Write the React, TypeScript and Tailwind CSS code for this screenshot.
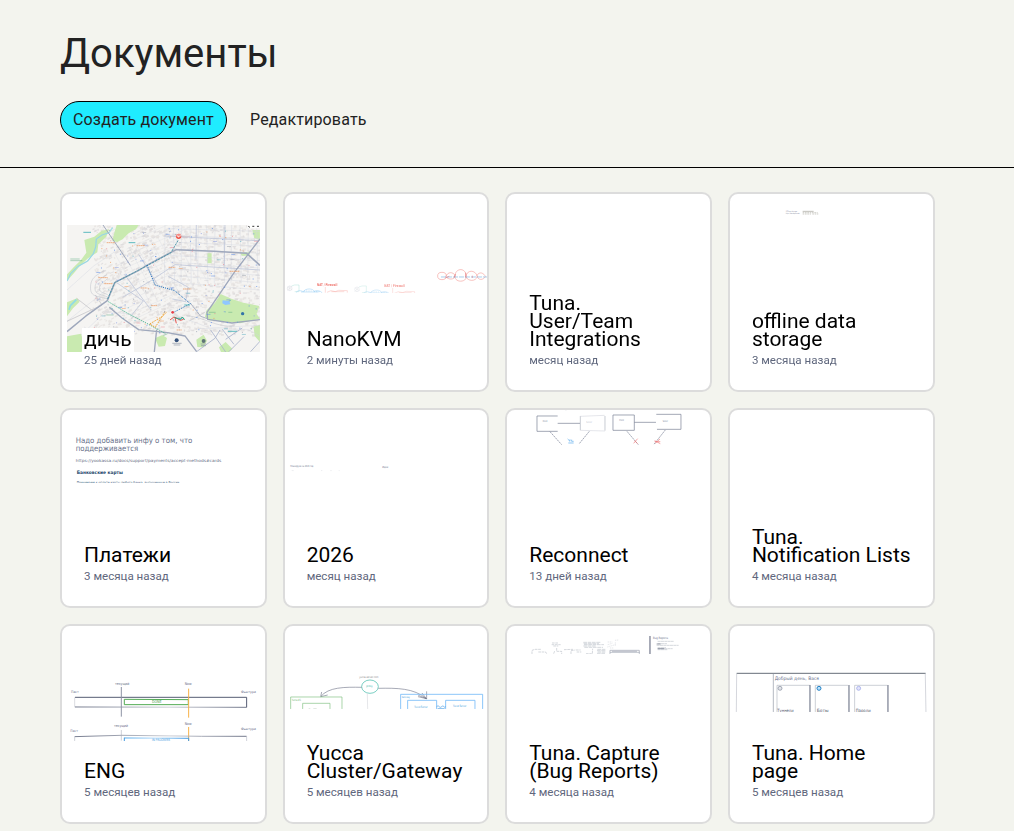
import * as React from 'react';

type PreviewProps = {
	// origin of the drawing inside the card, in thirds of a pixel
	x: number;
	y: number;
	// everything below this line is cut off
	bottom?: number;
	children: React.ReactNode;
};

const Preview: React.FC<PreviewProps> = ({ x, y, bottom = y + 588, children }) => (
	<svg
		viewBox={`${x} ${y} 608 588`}
		preserveAspectRatio="xMinYMin meet"
		className="col-start-1 row-start-1 h-full w-full"
		fontFamily="'DejaVu Sans', sans-serif"
		fill="none"
		aria-hidden="true"
	>
		<svg x={x} y={y} width="608" height={bottom - y} viewBox={`${x} ${y} 608 ${bottom - y}`}>
			{children}
		</svg>
	</svg>
);

type LabelProps = {
	x: number;
	y: number;
	w: number;
	size?: number;
	fill?: string;
	bold?: boolean;
	opacity?: number;
	children: string;
};

const Label: React.FC<LabelProps> = ({ x, y, w, size = 11, fill = '#68708a', bold, opacity, children }) => (
	<text
		x={x}
		y={y}
		fontSize={size}
		fill={fill}
		opacity={opacity}
		fontWeight={bold ? 700 : 400}
		textLength={w}
		lengthAdjust="spacingAndGlyphs"
	>
		{children}
	</text>
);

// deterministic noise for shops, stops and house blocks on the map
const noise = (n: number) => {
	const v = Math.sin(n * 127.1 + 11.7) * 43758.5453;
	return v - Math.floor(v);
};

const range = (n: number) => Array.from({ length: n }, (_, i) => i);

const poiColors = ['#5b8ce8', '#8a9be0', '#f09a5c', '#5b8ce8', '#e98a93', '#5aaec0', '#9aa0ad'];

const MapPreview: React.FC = () => (
	<Preview x={21} y={27}>
		<svg x="36" y="120" width="579" height="381" viewBox="36 120 579 381">
			<rect x="36" y="120" width="579" height="381" fill="#f5f4f2" />
			{range(1500).map((i) => {
				const x = 110 + noise(i) * 505;
				const y = 120 + noise(i + 4000) * 330;
				return (
					<rect
						key={i}
						x={x}
						y={y}
						width={3 + noise(i + 900) * 9}
						height={2 + noise(i + 700) * 5}
						fill={i % 3 ? '#e6e2e0' : '#dcdadb'}
						transform={x < 340 ? `rotate(-27 ${x} ${y})` : undefined}
						opacity="0.8"
					/>
				);
			})}
			{/* parks */}
			<g fill="#c9eab0">
				<path d="M185 120h66l-8 13-22 12-18 18-16 8-15-3 5-22z" />
				<path d="M88 165l30-10 22-18 22-4-8 22-24 23-3 24-28 18-25 24-15 18-23 26-6-13 26-28 22-22 16-22z" />
				<path d="M36 352l30-12 8 10-20 20-18 24z" />
				<path d="M36 454l42-8 8 26-6 29H36z" />
				<path d="M455 375l24-20 18-28 32 14 36 12 48 10-8 24 10 14-60 14-95-10-10-10z" />
				<path d="M457 205h13v30h-13zM556 203l28-3v12h-24zM592 135h23v30l-17-5zM596 425l19-6v52l-16-18z" />
				<path d="M300 460l22-10 14 9-6 24-19 2zM424 464l22-15 10 18-10 20-19-1zM492 487l20-16 20 20-10 10h-24z" />
			</g>
			{/* river */}
			<path d="M36 288l11-22 22-22 29-16 17-22 7-20 2-24 17-12 21-7 11-15" stroke="#a5e0ea" strokeWidth="4" />
			<path d="M36 288l11-22 22-22 29-16 17-22 7-20 2-24 17-12 21-7" stroke="#86bfce" />
			<path d="M42 374l4-12 18-18" stroke="#8edbe7" strokeWidth="5" />
			<path d="M503 346l20 2 3 10-15 2-9-5z" fill="#8fc7ff" />
			{/* side streets */}
			<g stroke="#d3d6e0" strokeWidth="1.5" opacity="0.85">
				{range(12).map((i) => (
					<path key={i} d={`M${330 + i * 25} 120l${i % 2 ? 4 : -2} 175`} />
				))}
				{range(9).map((i) => (
					<path key={i} d={`M345 ${131 + i * 20}l270 ${8 + i * 2}`} />
				))}
				{range(8).map((i) => (
					<path key={i} d={`M${150 + i * 13} ${312 - i * 24}l200 -88`} opacity="0.7" />
				))}
				{range(10).map((i) => (
					<path key={i} d={`M${177 + i * 22} ${200 - i * 7}l88 164`} opacity="0.7" />
				))}
				{range(7).map((i) => (
					<path key={i} d={`M${173 + i * 14} ${325 + i * 15}l160 -72`} opacity="0.7" />
				))}
				<path d="M36 315l80-72 65-44M78 450l74-70 82 8M87 426l102 65M36 409l113-90M400 405l65 24 150-8M430 430l150 4 35 20" />
			</g>
			<g stroke="#b3b8c2" strokeWidth="1.3">
				<path d="M158 342c-34-10-55-4-51-43 4-25 22-30 41-42M158 336c-23-9-43-7-37-35 6-19 21-22 35-33M158 329c-14-7-28-6-24-24 6-14 14-14 25-25" />
				<path d="M36 409l105-49-20-30M65 340l45 35" stroke="#9fa0a8" />
				<path d="M403 408l48-27M393 392c60 5 88 36 145 31" />
			</g>
			<g stroke="#bfc6da" strokeWidth="2.5">
				<path d="M424 120l-1 103M510 120l-2 122M327 153l286 14M185 293l80 55-38 46M340 274l60 33-8 43-40-8M251 208l56 90M208 268l80 107M285 289l75-50 255 16M203 337l82-48" />
				<path d="M425 500l55-40 15-25M467 435l45 66M512 463l50-34M522 500l45-45M587 500l28-31M537 478l-35-45" stroke="#a9b3cd" />
			</g>
			{/* highways */}
			<g stroke="#9fa8bc" strokeWidth="4.5" strokeLinejoin="round">
				<path d="M36 440l57-47 64-46 23-55 70-35 31-19 65-35 18-9 112 5 99 6 40 36" />
				<path d="M144 120l54 79 28 42" strokeWidth="3" />
				<path d="M163 367l39 33 49 34 87 9 52 10 35 47M305 434l-7 67" strokeWidth="4" />
				<path d="M615 162l-77 100-82 120 2 21 73 11 84-10" strokeWidth="4" />
				<path d="M406 354l31 40 20 7" strokeWidth="2.5" />
			</g>
			{/* routes */}
			<path d="M158 342l21-49 65-34 60-32 44-24 22-38" stroke="#4d96aa" strokeWidth="3" strokeDasharray="7 3" />
			<path d="M276 240l24 60 59 17 47 39-48 25" stroke="#1768b8" strokeWidth="3" strokeDasharray="3 3" />
			<path d="M160 350l61 37 60 31 51 28" stroke="#37ad85" strokeWidth="2.5" strokeDasharray="4 3" />
			<path d="M330 379l-9 16-37 22 17 10 17-28 17-18" stroke="#f0a536" strokeWidth="3" strokeDasharray="5 3" />
			<path d="M345 405l12-9 20 10 9-3M360 397l4 18" stroke="#e5524c" strokeWidth="3" />
			<path d="M359 398l18 5 5-7 7 8" stroke="#1e9f76" strokeWidth="3" />
			{range(185).map((i) => (
				<rect
					key={i}
					x={115 + noise(i + 77) * 490}
					y={124 + noise(i + 333) * 325}
					width={i % 6 === 0 ? 12 : 3}
					height={i % 6 === 0 ? 2 : 3}
					fill={poiColors[i % poiColors.length]}
					opacity="0.75"
				/>
			))}
			{[
				[155, 173, 25], [245, 182, 25], [130, 278, 28], [148, 296, 25], [341, 247, 20],
				[289, 362, 18], [384, 312, 25], [257, 309, 20], [524, 259, 30], [365, 435, 15],
			].map(([x, y, w]) => (
				<path key={`${x}-${y}`} d={`M${x} ${y}h${w}`} stroke="#eda06b" strokeWidth="2.5" strokeDasharray="5 1" />
			))}
			<path d="M85 142h23M221 173h20M388 360h17M369 401h13M519 439h27" stroke="#5bb9bf" strokeWidth="3" />
			<path d="M46 222h28M46 227h36M154 390h22M325 452l13-6M462 382h20M520 382h12" stroke="#61af82" strokeWidth="1.5" />
			<circle cx="371" cy="154" r="8" fill="#ee5145" />
			<path d="M366 150h10v4h-10zM371 153v5" stroke="#fff" strokeWidth="2" />
			<path d="M380 154h25M380 158h18" stroke="#b7989a" />
			<circle cx="353" cy="382" r="4" fill="#e73d47" />
			<circle cx="365" cy="466" r="6" fill="#35517b" />
			<circle cx="446" cy="468" r="6" fill="#607479" />
			<circle cx="563" cy="386" r="5" fill="#3474a8" />
			<path d="M352 475h28M356 480h20M437 477h17M438 482h15" stroke="#8d96a6" strokeWidth="2" />
			<path d="M577 120h38v10h-38z" fill="#fff" />
			<path d="M580 124l5 3M592 124h6M606 124h6" stroke="#333" strokeWidth="3" />
		</svg>
	</Preview>
);

const NanoPreview: React.FC = () => (
	<Preview x={29} y={27} bottom={324}>
		{[0, 202].map((dx) => (
			<g key={dx} transform={`translate(${dx} ${dx ? 3 : 0})`} opacity={dx ? 0.75 : 1}>
				<circle cx="43" cy="310" r="7" stroke="#c5c9d4" />
				<path d="M36 306l15 8M43 303v14M50 303l-15 14" stroke="#d5d8df" />
				<path d="M49 303l9-3h13v20H58" stroke="#8ed9cb" />
				<path d="M62 322c10-9 17-3 23-2 4-11 30-10 31-1 8-4 20-2 25 5M77 321h52" stroke="#91caf2" strokeWidth="1.5" />
				<path d="M85 318h24M115 320h20" stroke="#70b5e9" strokeDasharray="4 3" />
				<path d="M150 306v17M155 322l12-5 13 3 10-4 26 1v6M168 320h39" stroke="#f5958e" />
				<Label x={125} y={304} w={61} size={11} fill="#ef7770" bold>NAT / Firewall</Label>
			</g>
		))}
		<g stroke="#f49b95" strokeWidth="1.8">
			<ellipse cx="500" cy="273" rx="13" ry="11" />
			<path d="M512 275c4-15 22-16 28-2-3 12-21 12-28 2zM539 276c-2-27 33-31 34-2 2 18-32 20-34 2zM572 275c2-21 28-22 34-1-4 17-29 15-34 1zM605 272c6-14 22-8 25 3-6 11-22 12-25-3z" />
		</g>
		<path d="M497 276h138" stroke="#7db4e2" strokeWidth="2" strokeDasharray="15 3" />
		<path d="M510 279l12-5M541 267l-5 11M571 263v15M591 272v7" stroke="#dc5c63" strokeWidth="1.5" />
	</Preview>
);

const OfflinePreview: React.FC = () => (
	<Preview x={31} y={27} bottom={91}>
		<Label x={198} y={80} w={34} size={6} opacity={0.8}>Offline storage</Label>
		<Label x={198} y={87} w={42} size={6} opacity={0.8}>https://developer.web</Label>
		<path d="M249 79h33" stroke="#b5b2ab" strokeWidth="2.5" />
		<path d="M249 83h45M249 87h25M278 87h18" stroke="#b5b3ac" strokeDasharray="5 2" strokeWidth="2" />
	</Preview>
);

const PaymentsPreview: React.FC = () => (
	<Preview x={21} y={30} bottom={249}>
		<Label x={62} y={128} w={350} size={23}>Надо добавить инфу о том, что</Label>
		<Label x={62} y={153} w={188} size={23}>поддерживается</Label>
		<Label x={62} y={185} w={437} size={12} fill="#646c83">https://yookassa.ru/docs/support/payments/accept-methods#cards</Label>
		<Label x={65} y={221} w={139} size={14} fill="#24476b" bold>Банковские карты</Label>
		<Label x={65} y={252} w={308} size={12} fill="#41637e">Принимаем к оплате карты любого банка, выпущенные в России</Label>
	</Preview>
);

const YearPreview: React.FC = () => (
	<Preview x={29} y={30} bottom={214}>
		<Label x={45} y={201} w={69} size={8}>Планируем на 2026 год</Label>
		<Label x={321} y={203} w={18} size={8}>Идеи</Label>
		<path d="M49 212h6M137 212h4M165 212h4M190 212h3" stroke="#c4c8d2" />
	</Preview>
);

const ReconnectPreview: React.FC = () => (
	<Preview x={22} y={30} bottom={135}>
		<g stroke="#747b91" strokeWidth="2">
			<path d="M174 48H112v46h62" />
			<path d="M174 70h67M404 67h65" />
			<path d="M242 48v43M316 48v44" opacity="0.6" />
			<path d="M242 49l73-3M243 91l73 2" stroke="#d8dae1" />
			<path d="M340 45h64v46h-64z" />
			<path d="M470 43h74v45h-72" />
			<path d="M151 95l35 39M269 94l-31 38M382 94l34 40M497 90l-34 43" strokeDasharray="6 2" />
		</g>
		<Label x={129} y={67} w={14} size={8}>Client</Label>
		<Label x={260} y={69} w={17} size={8} opacity={0.5}>Server</Label>
		<Label x={359} y={64} w={14} size={8}>Client</Label>
		<Label x={489} y={66} w={16} size={8}>Server</Label>
		<path d="M204 117l7 7v-6M216 119v5h6M206 129h16" stroke="#58a9ec" strokeWidth="2" />
		<path d="M402 130l12-14M405 122l9 9M465 122l17 9M467 130l14-13M465 125h17" stroke="#ee7878" strokeWidth="2" />
		<path d="M197 32l5-3" stroke="#d9dbe2" />
	</Preview>
);

const EngPreview: React.FC = () => (
	<Preview x={21} y={30} bottom={375}>
		<defs>
			<linearGradient id="bar" x1="0" x2="1">
				<stop stopColor="#5b6279" />
				<stop offset="0.38" stopColor="#a2a7b4" />
				<stop offset="0.55" stopColor="#c1c4cd" />
				<stop offset="1" stopColor="#555c73" />
			</linearGradient>
			<linearGradient id="line" x1="0" x2="1">
				<stop stopColor="#52a9eb" />
				<stop offset="0.5" stopColor="#b7dcfb" />
				<stop offset="1" stopColor="#4098e2" />
			</linearGradient>
		</defs>
		<path d="M60 244h515v30" stroke="#555c73" strokeWidth="3" />
		<path d="M59 244v30" stroke="#c8cbd2" strokeWidth="2" />
		<path d="M60 273l515 1" stroke="url(#bar)" strokeWidth="2.5" />
		<path d="M208 250l192 1v15H208z" stroke="#51ab53" strokeWidth="3" />
		<Label x={291} y={261} w={29} size={12} fill="#4da052">DONE</Label>
		<path d="M199 213v89" stroke="#8d93a4" strokeWidth="3" />
		<path d="M401 218v87M401 333v42" stroke="#f7b248" strokeWidth="3" />
		<Label x={180} y={207} w={43} size={11}>текущий</Label>
		<Label x={389} y={207} w={21} size={11}>Now</Label>
		<Label x={48} y={231} w={24} size={10}>Паст</Label>
		<Label x={558} y={231} w={45} size={10}>Фьютура</Label>
		<Label x={177} y={333} w={42} size={11}>текущий</Label>
		<Label x={389} y={328} w={21} size={11}>Now</Label>
		<Label x={46} y={348} w={23} size={10}>Паст</Label>
		<Label x={558} y={341} w={45} size={10}>Фьютура</Label>
		<path d="M199 342v32" stroke="#cdd0d7" strokeWidth="3" />
		<path d="M59 362l141-4 240 3h135" stroke="url(#bar)" strokeWidth="2.5" />
		<path d="M59 362v13M575 361v14" stroke="#b9bdc7" strokeWidth="2" />
		<path d="M208 366l191 1" stroke="url(#line)" strokeWidth="3" />
		<path d="M208 365v11M401 365v11" stroke="#4399df" strokeWidth="3" />
		<Label x={291} y={375} w={54} size={10} fill="#429ce1">IN PROGRESS</Label>
	</Preview>
);

const YuccaPreview: React.FC = () => (
	<Preview x={29} y={30} bottom={279}>
		<Label x={252} y={185} w={57} size={9} fill="#888">yucca-server.com</Label>
		<ellipse cx="284" cy="212" rx="25" ry="20" stroke="#37b7a5" strokeWidth="2" />
		<Label x={273} y={213} w={19} size={9} fill="#2bb29f">proxy</Label>
		<path d="M259 214c-51-1-100-1-123 28l3-14M137 242l20-5M309 217c55-1 107-1 144 31M429 238l24 10-25-6M454 226v23l-14-18" stroke="#63697e" strokeWidth="1.7" />
		<path d="M276 232l1 47" stroke="#d9dbe0" strokeWidth="2" />
		<path d="M46 279v-36h154v36M82 279v-17h82v17" stroke="#7fbf80" strokeWidth="2" />
		<Label x={49} y={254} w={28} size={9} fill="#6fb172">Yucca #1</Label>
		<path d="M376 279v-44h246v44M397 279v-26h87v26M511 279v-26h88v26" stroke="#75bbf8" strokeWidth="2.5" />
		<Label x={379} y={245} w={25} size={8} fill="#489fe0">Gateway</Label>
		<Label x={417} y={277} w={40} size={10} fill="#489fe0">Yucca Server</Label>
		<Label x={533} y={273} w={40} size={10} fill="#489fe0">Yucca Server</Label>
		<path d="M484 272c8-7 8 7 15 0 8-7 6 7 12 0M487 278h21" stroke="#429ae4" strokeWidth="2" />
		<path d="M100 278h5M114 278h10" stroke="#98b49a" />
	</Preview>
);

const CapturePreview: React.FC = () => (
	<Preview x={22} y={30} bottom={114}>
		<g stroke="#9da3b0" strokeWidth="1.3">
			<path d="M97 114v-11l9-3h18M116 108h22l3 5M157 81h18M156 86h27M161 90h15M171 96v10h15v8M162 113l3-8M193 101l27-1M214 114v-10l13-2M229 102h14M231 108h14M259 113h17M278 113l1-15" strokeDasharray="8 2" />
			<path d="M251 79h53M252 83h46M253 86h60M251 90h38M254 94h56M293 100h26M292 104h27M294 108h23M292 112h26" strokeDasharray="11 2" />
			<path d="M324 78h14M346 73l10-1M324 86l14-4M323 93l24-7M331 96h10M347 79v12" strokeDasharray="4 2" opacity="0.6" />
			<path d="M331 114v-11h88v11M331 109h89M337 106h75" strokeWidth="2" />
			<path d="M451 60v54" stroke="#555c73" strokeWidth="3" />
			<path d="M474 76h48M474 83h28M471 88h66M474 95h25M474 98h45M474 101h30" strokeDasharray="9 1" />
			<path d="M471 84h12M474 98h20" stroke="#70778a" strokeWidth="2" />
		</g>
		<Label x={460} y={68} w={45} size={9}>Bug Reports</Label>
	</Preview>
);

const HomePreview: React.FC = () => (
	<Preview x={31} y={30} bottom={288}>
		<path d="M51 172h567" stroke="#656c77" strokeWidth="3" />
		<path d="M51 172l-1 116M617 173l2 115" stroke="#bfc3cb" strokeWidth="2" />
		<path d="M161 173v115" stroke="#8e94a1" strokeWidth="2" />
		<Label x={165} y={193} w={133} size={14}>Добрый день, Вася</Label>
		{[172, 287, 405].map((x, i) => (
			<g key={x}>
				<path d={`M${x} 288v-80h98`} stroke="#a6abb8" strokeWidth="1.7" />
				<path d={`M${[271, 388, 505][i]} 207v81`} stroke="#5d6479" strokeWidth="3" />
				<circle
					cx={[181, 298, 417][i]}
					cy="217"
					r="6"
					stroke={['#7e8798', '#217fc4', '#949fe5'][i]}
					fill={['#e2e4e8', '#b9e1fc', '#e2e3fa'][i]}
					strokeWidth={i === 1 ? 3 : 2}
				/>
				<Label x={[173, 291, 408][i]} y={287} w={[49, 36, 45][i]} size={13} fill="#4f566a">
					{['Туннели', 'Боты', 'Пароли'][i]}
				</Label>
			</g>
		))}
	</Preview>
);

type Doc = {
	title: string;
	date: string;
	preview?: React.FC;
};

const docs: Doc[] = [
	{ title: 'дичь', date: '25 дней назад', preview: MapPreview },
	{ title: 'NanoKVM', date: '2 минуты назад', preview: NanoPreview },
	{ title: 'Tuna.\nUser/Team\nIntegrations', date: 'месяц назад' },
	{ title: 'offline data\nstorage', date: '3 месяца назад', preview: OfflinePreview },
	{ title: 'Платежи', date: '3 месяца назад', preview: PaymentsPreview },
	{ title: '2026', date: 'месяц назад', preview: YearPreview },
	{ title: 'Reconnect', date: '13 дней назад', preview: ReconnectPreview },
	{ title: 'Tuna.\nNotification Lists', date: '4 месяца назад' },
	{ title: 'ENG', date: '5 месяцев назад', preview: EngPreview },
	{ title: 'Yucca\nCluster/Gateway', date: '5 месяцев назад', preview: YuccaPreview },
	{ title: 'Tuna. Capture\n(Bug Reports)', date: '4 месяца назад', preview: CapturePreview },
	{ title: 'Tuna. Home\npage', date: '5 месяцев назад', preview: HomePreview },
];

const DocCard: React.FC<{ doc: Doc }> = ({ doc }) => {
	const Drawing = doc.preview;
	return (
		<a className="grid h-[200px] grid-cols-1 grid-rows-1 overflow-hidden rounded-[10px] border-2 border-[#dcdcdc] bg-white">
			{Drawing && <Drawing />}
			<div className="z-10 col-start-1 row-start-1 flex flex-col items-start justify-end px-5 pb-[22px]">
				<h2 className="bg-white px-0.5 pt-0.5 pb-1 text-[21px] leading-[18px] whitespace-pre text-black">
					{doc.title}
				</h2>
				<p className="bg-white px-0.5 text-[11.6px] leading-4 text-[#5f677d]">{doc.date}</p>
			</div>
		</a>
	);
};

const App: React.FC = () => (
	<div className="h-[831px] overflow-hidden bg-[#f3f4ee] font-['Roboto',sans-serif] text-[#222]">
		<header className="h-[168px] border-b border-black px-[60px] pt-[30px]">
			<h1 className="text-[40px] leading-[48px]">Документы</h1>
			<div className="mt-[23px] flex items-center">
				<button className="h-[38px] w-[167px] rounded-full border border-black bg-[#1fecff] text-[16px] tracking-[0.15px] whitespace-nowrap">
					Создать документ
				</button>
				<button className="ml-[23px] text-[16px] tracking-[0.15px]">Редактировать</button>
			</div>
		</header>
		<main className="grid w-[934.5px] grid-cols-4 gap-4 pt-6 pl-[60px]">
			{docs.map((doc) => (
				<DocCard key={doc.title} doc={doc} />
			))}
		</main>
	</div>
);

export default App;
